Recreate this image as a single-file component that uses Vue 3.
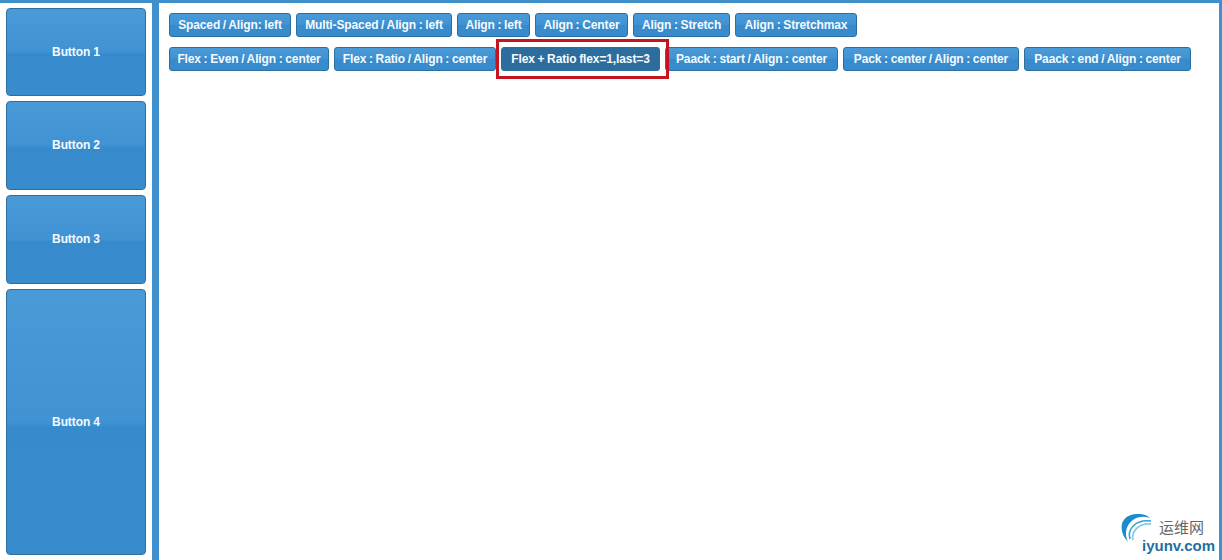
<template>
  <div class="page">
    <aside class="side">
      <button v-for="b in sideButtons" :key="b.label" class="side-btn" :class="{ grow: b.grow }">{{ b.label }}</button>
    </aside>
    <main class="content">
      <div class="toolbar">
        <button
          v-for="t in rowOne"
          :key="t.label"
          class="btn"
          :style="{ width: t.width + 'px' }"
        >{{ t.label }}</button>
      </div>
      <div class="toolbar second">
        <button
          v-for="t in rowTwo"
          :key="t.label"
          class="btn"
          :class="{ pressed: t.label === activeLabel }"
          :style="{ width: t.width + 'px' }"
        >{{ t.label }}</button>
      </div>
      <div class="logo">
        <svg class="logo-mark" width="46" height="46" viewBox="0 0 46 46">
          <path d="M9 28C-1 18 0 1 17 0C23 -0.5 28 1 31 4C25 2 19 2 14 6C7 11 5 20 9 28Z" fill="#1a8ccb" />
          <path d="M11 25C8 15 17 5 32 7" fill="none" stroke="#35a2da" stroke-width="1.600" />
          <path d="M14 26C12 17 20 9 32 10" fill="none" stroke="#8ccbe8" stroke-width="1.800" />
        </svg>
        <span class="logo-cn">运维网</span>
        <span class="logo-en">iyunv.com</span>
      </div>
    </main>
  </div>
</template>

<script setup>
const sideButtons = [
  { label: "Button 1" },
  { label: "Button 2" },
  { label: "Button 3" },
  { label: "Button 4", grow: true }
];

const rowOne = [
  { label: "Spaced / Align: left", width: 122 },
  { label: "Multi-Spaced / Align : left", width: 156 },
  { label: "Align : left", width: 73 },
  { label: "Align : Center", width: 93 },
  { label: "Align : Stretch", width: 97 },
  { label: "Align : Stretchmax", width: 122 }
];

const rowTwo = [
  { label: "Flex : Even / Align : center", width: 160 },
  { label: "Flex : Ratio / Align : center", width: 162 },
  { label: "Flex + Ratio flex=1,last=3", width: 159 },
  { label: "Paack : start / Align : center", width: 173 },
  { label: "Pack : center / Align : center", width: 176 },
  { label: "Paack : end / Align : center", width: 167 }
];

const activeLabel = "Flex + Ratio flex=1,last=3";
</script>

<style>
html,
body {
  margin: 0;
  background: #fff;
}
</style>

<style scoped>
.page {
  display: flex;
  height: 560px;
  box-sizing: border-box;
  background: #3f90cd;
  padding: 3px 3px 0 0;
  gap: 7px;
  font-family: "Liberation Sans", Arial, sans-serif;
}

/* left buttons */
.side {
  flex: none;
  width: 152px;
  box-sizing: border-box;
  background: #fff;
  padding: 5px 6px;
  display: flex;
  flex-direction: column;
  gap: 5px;
}
.side-btn {
  height: 89px;
  flex: none;
  padding: 0 0 1px;
  border: 1px solid #2a6f9f;
  border-radius: 4px;
  background: linear-gradient(to bottom, #4a9ad7 0%, #4092d3 50%, #378bcd 52%, #388ccc 100%);
  color: #f4fbff;
  font: bold 12px "Liberation Sans", Arial, sans-serif;
  letter-spacing: -0.1px;
}
.side-btn:first-child {
  height: 88px;
}
.side-btn.grow {
  flex: 1;
}

/* right panel */
.content {
  position: relative;
  flex: 1;
  min-width: 0;
  background: #fff;
  padding: 10px;
}
.toolbar {
  display: flex;
  gap: 5px;
}
.toolbar.second {
  margin-top: 10px;
}
.btn {
  height: 24px;
  padding: 0;
  border: 1px solid #2a6f9f;
  border-radius: 3px;
  background: linear-gradient(to bottom, #4a9ad7 0%, #4092d3 50%, #378bcd 52%, #388ccc 100%);
  color: #f4fbff;
  font: bold 12px "Liberation Sans", Arial, sans-serif;
  letter-spacing: -0.12px;
  word-spacing: -0.5px;
  white-space: nowrap;
}
.btn.pressed {
  position: relative;
  background: #2c6d9e;
  border-color: #2c6d9e;
}
.btn.pressed::after {
  content: "";
  position: absolute;
  left: -6px;
  right: -10px;
  top: -9px;
  bottom: -9px;
  border: 3px solid #c5141f;
}

/* watermark */
.logo {
  position: absolute;
  right: 0;
  bottom: 0;
  width: 100px;
  height: 46px;
}
.logo-mark {
  position: absolute;
  left: 0;
  top: 0;
}
.logo-cn {
  position: absolute;
  left: 40px;
  top: 4px;
  font: 15px "Noto Sans CJK SC", sans-serif;
  color: #666;
  line-height: 18px;
}
.logo-en {
  position: absolute;
  left: 23px;
  top: 23px;
  font: bold 15px "Liberation Sans", Arial, sans-serif;
  color: #1f6f9f;
  line-height: 18px;
}
</style>
